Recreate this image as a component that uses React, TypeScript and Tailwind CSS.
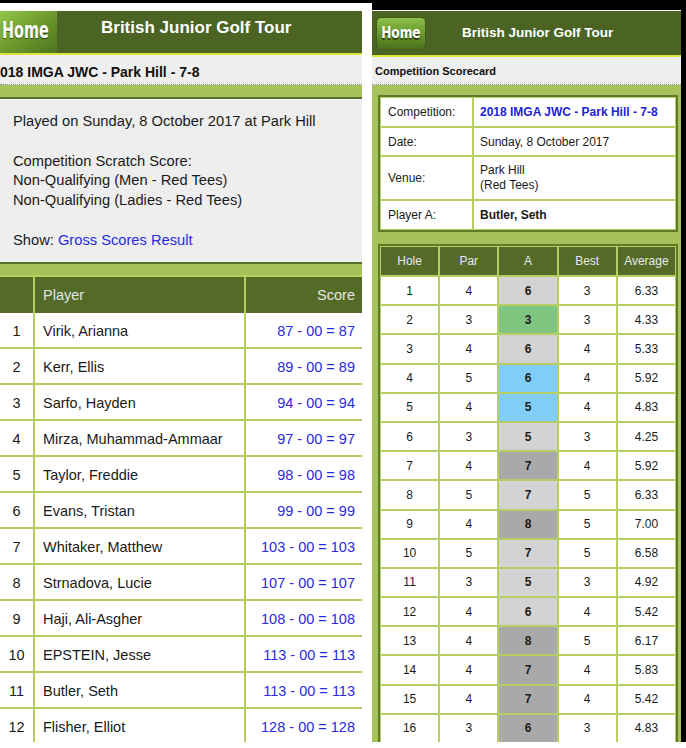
import React from 'react';

const players: [number, string, number][] = [
  [1, 'Virik, Arianna', 87],
  [2, 'Kerr, Ellis', 89],
  [3, 'Sarfo, Hayden', 94],
  [4, 'Mirza, Muhammad-Ammaar', 97],
  [5, 'Taylor, Freddie', 98],
  [6, 'Evans, Tristan', 99],
  [7, 'Whitaker, Matthew', 103],
  [8, 'Strnadova, Lucie', 107],
  [9, 'Haji, Ali-Asgher', 108],
  [10, 'EPSTEIN, Jesse', 113],
  [11, 'Butler, Seth', 113],
  [12, 'Flisher, Elliot', 128],
];

// hole, par, score, best, average, colour of the score cell
const holes: [number, number, number, number, string, string][] = [
  [1, 4, 6, 3, '6.33', 'bg-[#d3d3d3]'],
  [2, 3, 3, 3, '4.33', 'bg-[#7fc47f]'],
  [3, 4, 6, 4, '5.33', 'bg-[#d3d3d3]'],
  [4, 5, 6, 4, '5.92', 'bg-[#80cdf9]'],
  [5, 4, 5, 4, '4.83', 'bg-[#80cdf9]'],
  [6, 3, 5, 3, '4.25', 'bg-[#d3d3d3]'],
  [7, 4, 7, 4, '5.92', 'bg-[#a9a9a9]'],
  [8, 5, 7, 5, '6.33', 'bg-[#d3d3d3]'],
  [9, 4, 8, 5, '7.00', 'bg-[#a9a9a9]'],
  [10, 5, 7, 5, '6.58', 'bg-[#d3d3d3]'],
  [11, 3, 5, 3, '4.92', 'bg-[#d3d3d3]'],
  [12, 4, 6, 4, '5.42', 'bg-[#d3d3d3]'],
  [13, 4, 8, 5, '6.17', 'bg-[#a9a9a9]'],
  [14, 4, 7, 4, '5.83', 'bg-[#a9a9a9]'],
  [15, 4, 7, 4, '5.42', 'bg-[#a9a9a9]'],
  [16, 3, 6, 3, '4.83', 'bg-[#a9a9a9]'],
];

const homeFont =
  "inline-block [font-family:'Liberation_Sans_Narrow','DejaVu_Sans_Condensed',sans-serif] font-bold text-white leading-none [text-shadow:0_1px_1px_rgba(0,0,0,0.55)]";

const LeftPanel = () => (
  <div className="w-[362px] h-[742px] overflow-hidden flex flex-col">
    <div className="h-[3px] shrink-0 bg-black" />
    <div className="h-[8px] shrink-0 bg-white" />
    {/* header bar */}
    <div className="h-[44px] shrink-0 bg-[#4b6423] border-b-2 border-[#dce33a] flex items-stretch">
      <div className="w-[57px] bg-gradient-to-br from-[#94c64a] via-[#6c9a2d] to-[#4e7420] flex items-center pl-[2px] pb-[4px]">
        <span className={`${homeFont} text-[20px] origin-left scale-x-80 scale-y-115`}>Home</span>
      </div>
      <div className="ml-[44px] pb-[8px] flex items-center text-[17px] font-bold text-white">British Junior Golf Tour</div>
    </div>
    {/* competition title */}
    <div className="h-[30px] shrink-0 pt-[5px] bg-[#efefef] border-b border-dotted border-[#8a8a8a] flex items-center text-[14px] font-bold text-[#111]">
      018 IMGA JWC - Park Hill - 7-8
    </div>
    <div className="h-[14px] shrink-0 bg-[#a7c25b] border-b-2 border-[#55702a]" />
    {/* info */}
    <div className="h-[163px] shrink-0 bg-[#eeeeee] pl-[13px] pt-[13px] text-[14.7px] leading-[19.8px] text-[#1a1a1a]">
      <div>Played on Sunday, 8 October 2017 at Park Hill</div>
      <div className="mt-[19.8px]">Competition Scratch Score:</div>
      <div>Non-Qualifying (Men - Red Tees)</div>
      <div>Non-Qualifying (Ladies - Red Tees)</div>
      <div className="mt-[19.8px]">
        Show: <span className="text-[#2a2ae0]">Gross Scores Result</span>
      </div>
    </div>
    <div className="h-[13px] shrink-0 bg-[#a7c25b] border-t-2 border-[#55702a]" />
    {/* results table */}
    <div className="flex shrink-0 h-[38px] bg-[#536b27] border-t-2 border-[#b5cc5f] text-[14.5px] text-[#e4e4e4]">
      <div className="w-[35px] border-r-2 border-[#b5cc5f]" />
      <div className="w-[211px] border-r-2 border-[#b5cc5f] pl-[8px] pt-[1px] flex items-center">Player</div>
      <div className="flex-1 pr-[7px] pt-[1px] flex items-center justify-end">Score</div>
    </div>
    {players.map(([pos, name, score]) => (
      <div key={pos} className="flex shrink-0 h-[36px] bg-white border-b-2 border-[#b5cc5f] text-[14.5px]">
        <div className="w-[35px] border-r-2 border-[#b5cc5f] pt-[3px] flex items-center justify-center text-[#1a1a1a]">{pos}</div>
        <div className="w-[211px] border-r-2 border-[#b5cc5f] pl-[8px] pt-[3px] flex items-center text-[#1a1a1a]">{name}</div>
        <div className="flex-1 pr-[7px] pt-[3px] flex items-center justify-end text-[#2a2ae0]">
          {score} - 00 = {score}
        </div>
      </div>
    ))}
  </div>
);

const InfoRow = ({ label, h, children }: { label: string; h: string; children: React.ReactNode }) => (
  <>
    <div className={`${h} bg-white pl-[7px] flex items-center`}>{label}</div>
    <div className={`${h} bg-white pl-[6px] flex items-center`}>{children}</div>
  </>
);

const RightPanel = () => (
  <div className="w-[309px] h-[742px] overflow-hidden flex flex-col">
    <div className="h-[10px] shrink-0 bg-black" />
    <div className="h-[1px] shrink-0 bg-white" />
    <div className="h-[46px] shrink-0 bg-[#4b6423] border-b-2 border-[#dce33a] flex items-center">
      <div className="ml-[4px] w-[50px] h-[33px] rounded-[5px] border border-[#3f5a1a] bg-gradient-to-b from-[#8cc04a] via-[#6a9a2c] to-[#4b701f] flex items-center justify-center">
        <span className={`${homeFont} text-[15px] scale-x-90 scale-y-110`}>Home</span>
      </div>
      <div className="ml-[36px] text-[13.5px] font-bold text-white">British Junior Golf Tour</div>
    </div>
    <div className="h-[28px] shrink-0 bg-[#efefef] border-b border-dotted border-[#8a8a8a] pl-[3px] pt-[1px] flex items-center text-[11px] font-bold text-[#111]">
      Competition Scorecard
    </div>
    <div className="flex-1 bg-[#a6c25a] pt-[10px] pl-[6px] pr-[3px]">
      {/* details card */}
      <div className="border-2 border-[#5e7b2b] bg-[#b7ce62] p-[1px] grid grid-cols-[91px_1fr] gap-[2px] text-[12px] text-[#1a1a1a]">
        <InfoRow label="Competition:" h="h-[28px]">
          <span className="font-bold text-[#2323d6]">2018 IMGA JWC - Park Hill - 7-8</span>
        </InfoRow>
        <InfoRow label="Date:" h="h-[27px]">Sunday, 8 October 2017</InfoRow>
        <InfoRow label="Venue:" h="h-[42px]">
          <div className="leading-[15px]">
            Park Hill
            <br />
            (Red Tees)
          </div>
        </InfoRow>
        <InfoRow label="Player A:" h="h-[28px]">
          <span className="font-bold">Butler, Seth</span>
        </InfoRow>
      </div>
      {/* scorecard */}
      <div className="mt-[12px] border-2 border-[#5e7b2b] bg-[#b7ce62] p-[1px] grid grid-cols-5 gap-[2px] text-[12px] text-[#1a1a1a]">
        {['Hole', 'Par', 'A', 'Best', 'Average'].map((h) => (
          <div key={h} className="h-[28px] bg-[#536b27] text-[#e8e8e8] flex items-center justify-center">
            {h}
          </div>
        ))}
        {holes.map(([hole, par, score, best, avg, colour]) => (
          <React.Fragment key={hole}>
            <div className="h-[27.2px] bg-white flex items-center justify-center">{hole}</div>
            <div className="h-[27.2px] bg-white flex items-center justify-center">{par}</div>
            <div className={`h-[27.2px] ${colour} flex items-center justify-center font-bold`}>{score}</div>
            <div className="h-[27.2px] bg-white flex items-center justify-center">{best}</div>
            <div className="h-[27.2px] bg-white flex items-center justify-center">{avg}</div>
          </React.Fragment>
        ))}
      </div>
    </div>
  </div>
);

export default function App() {
  return (
    <div className="w-[686px] h-[748px] bg-white overflow-hidden flex items-start [font-family:'Liberation_Sans',Arial,sans-serif]">
      <LeftPanel />
      <div className="w-[10px] h-[3px] bg-black" />
      <RightPanel />
      <div className="w-[5px] h-[742px] bg-black" />
    </div>
  );
}
